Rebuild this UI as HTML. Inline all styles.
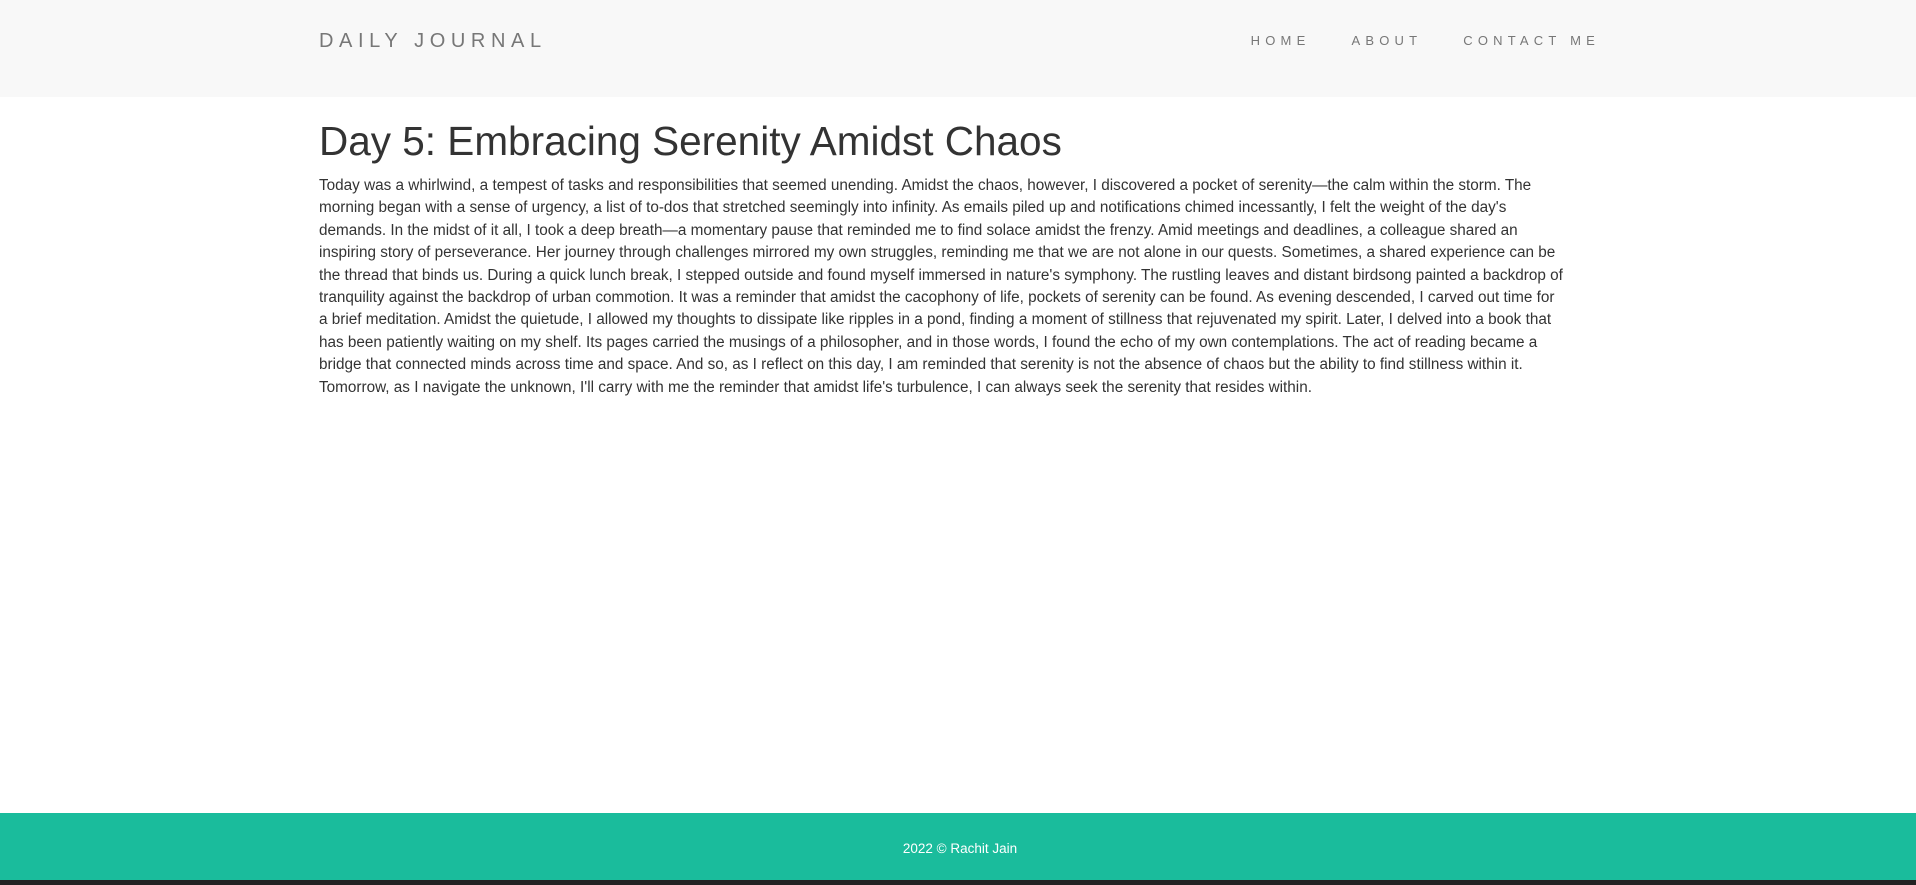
<!DOCTYPE html>
<html><head><meta charset="utf-8"><style>
*{margin:0;padding:0;box-sizing:border-box}
html,body{width:1916px;height:885px;overflow:hidden;background:#fff;font-family:"Liberation Sans",Arial,sans-serif}
.nav{position:absolute;top:0;left:0;width:1916px;height:97px;background:#f8f8f8}
.brand{position:absolute;left:319px;top:30px;font-size:20px;letter-spacing:5.6px;color:#777}
.links{position:absolute;right:316px;top:33px;font-size:13px;letter-spacing:5.2px;color:#777}
.links span{margin-left:41px}
.main{position:absolute;left:319px;top:117px;width:1400px;color:#333}
h1{font-weight:400;font-size:40.5px;line-height:48px;margin-bottom:10px}
p{font-size:15.3px;line-height:22.4px;white-space:nowrap}
.foot{position:absolute;left:0;top:813px;width:1916px;height:67px;background:#1abc9c;color:#fff;font-size:13.5px;text-align:center;line-height:72px}
.foot span{position:relative;left:2px}
.bar{position:absolute;left:0;top:880px;width:1916px;height:5px;background:#222}
</style></head><body>
<div class="nav"><div class="brand">DAILY JOURNAL</div><div class="links"><span>HOME</span><span>ABOUT</span><span>CONTACT ME</span></div></div>
<div class="main"><h1>Day 5: Embracing Serenity Amidst Chaos</h1>
<p>Today was a whirlwind, a tempest of tasks and responsibilities that seemed unending. Amidst the chaos, however, I discovered a pocket of serenity—the calm within the storm. The<br>morning began with a sense of urgency, a list of to-dos that stretched seemingly into infinity. As emails piled up and notifications chimed incessantly, I felt the weight of the day's<br>demands. In the midst of it all, I took a deep breath—a momentary pause that reminded me to find solace amidst the frenzy. Amid meetings and deadlines, a colleague shared an<br>inspiring story of perseverance. Her journey through challenges mirrored my own struggles, reminding me that we are not alone in our quests. Sometimes, a shared experience can be<br>the thread that binds us. During a quick lunch break, I stepped outside and found myself immersed in nature's symphony. The rustling leaves and distant birdsong painted a backdrop of<br>tranquility against the backdrop of urban commotion. It was a reminder that amidst the cacophony of life, pockets of serenity can be found. As evening descended, I carved out time for<br>a brief meditation. Amidst the quietude, I allowed my thoughts to dissipate like ripples in a pond, finding a moment of stillness that rejuvenated my spirit. Later, I delved into a book that<br>has been patiently waiting on my shelf. Its pages carried the musings of a philosopher, and in those words, I found the echo of my own contemplations. The act of reading became a<br>bridge that connected minds across time and space. And so, as I reflect on this day, I am reminded that serenity is not the absence of chaos but the ability to find stillness within it.<br>Tomorrow, as I navigate the unknown, I'll carry with me the reminder that amidst life's turbulence, I can always seek the serenity that resides within.</p></div>
<div class="foot"><span>2022 © Rachit Jain</span></div>
<div class="bar"></div>
</body></html>
